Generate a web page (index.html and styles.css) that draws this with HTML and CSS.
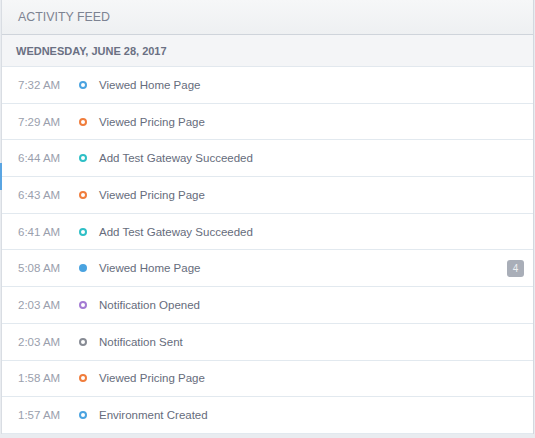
FILE: index.html
```html
<!DOCTYPE html>
<html>
<head>
<meta charset="utf-8">
<link rel="stylesheet" href="styles.css">
</head>
<body>
<div class="page">
  <div class="feed">
    <div class="feed-header">ACTIVITY FEED</div>
    <div class="day">WEDNESDAY, JUNE 28, 2017</div>
    <ul class="rows">
      <li class="row"><span class="time">7:32 AM</span><span class="dot ring blue"></span><span class="event">Viewed Home Page</span></li>
      <li class="row"><span class="time">7:29 AM</span><span class="dot ring orange"></span><span class="event">Viewed Pricing Page</span></li>
      <li class="row"><span class="time">6:44 AM</span><span class="dot ring teal"></span><span class="event">Add Test Gateway Succeeded</span></li>
      <li class="row"><span class="time">6:43 AM</span><span class="dot ring orange"></span><span class="event">Viewed Pricing Page</span></li>
      <li class="row"><span class="time">6:41 AM</span><span class="dot ring teal"></span><span class="event">Add Test Gateway Succeeded</span></li>
      <li class="row"><span class="time">5:08 AM</span><span class="dot fill blue"></span><span class="event">Viewed Home Page</span><span class="count">4</span></li>
      <li class="row"><span class="time">2:03 AM</span><span class="dot ring purple"></span><span class="event">Notification Opened</span></li>
      <li class="row"><span class="time">2:03 AM</span><span class="dot ring grey"></span><span class="event">Notification Sent</span></li>
      <li class="row"><span class="time">1:58 AM</span><span class="dot ring orange"></span><span class="event">Viewed Pricing Page</span></li>
      <li class="row"><span class="time">1:57 AM</span><span class="dot ring blue"></span><span class="event">Environment Created</span></li>
    </ul>
  </div>
  <span class="marker"></span>
</div>
</body>
</html>
```

FILE: styles.css
```css
html, body {
  margin: 0;
  padding: 0;
  background: #eef0f3;
}
body {
  font-family: "Liberation Sans", Arial, sans-serif;
  width: 535px;
  height: 438px;
  overflow: hidden;
}
.page {
  position: relative;
  width: 535px;
  height: 438px;
  background: #e9ecf0;
}
.feed {
  margin-left: 1px;
  width: 531px;
  border-left: 1px solid #d9dde3;
  border-right: 1px solid #d3d8df;
  background: #fff;
}
.feed-header {
  height: 35px;
  box-sizing: border-box;
  padding: 10px 0 0 16px;
  font-size: 12.4px;
  color: #7d8392;
  background: linear-gradient(#f6f7f8, #eef0f2);
  border-bottom: 1px solid #cfd4db;
}
.day {
  height: 32px;
  box-sizing: border-box;
  padding: 10px 0 0 14px;
  font-size: 11px;
  font-weight: bold;
  color: #6a7083;
  background: #f4f5f7;
  border-bottom: 1px solid #e2e8ee;
}
.rows {
  list-style: none;
  margin: 0;
  padding: 0;
}
.row {
  display: flex;
  align-items: center;
  height: 36.7px;
  box-sizing: border-box;
  border-bottom: 1px solid #e2e9ef;
  font-size: 11.5px;
  padding-left: 16px;
}
.time {
  width: 61px;
  color: #9aa0ad;
}
.dot {
  width: 8px;
  height: 8px;
  border-radius: 50%;
  box-sizing: border-box;
  margin-right: 12px;
}
.ring { border: 2.5px solid; }
.ring.blue { border-color: #4aa3e0; }
.ring.orange { border-color: #f07d3c; }
.ring.teal { border-color: #2ebfc6; }
.ring.purple { border-color: #a37ad3; }
.ring.grey { border-color: #878b94; }
.fill.blue { background: #4aa3e0; }
.event {
  color: #666c7c;
  flex: 1;
}
.count {
  width: 17px;
  height: 17px;
  border-radius: 3px;
  background: #a9aeb8;
  color: #eef0f3;
  font-size: 10px;
  display: flex;
  align-items: center;
  justify-content: center;
  margin-right: 9px;
}
.marker {
  position: absolute;
  left: 0;
  top: 163px;
  width: 2px;
  height: 27px;
  background: #5aa5e2;
}
```
